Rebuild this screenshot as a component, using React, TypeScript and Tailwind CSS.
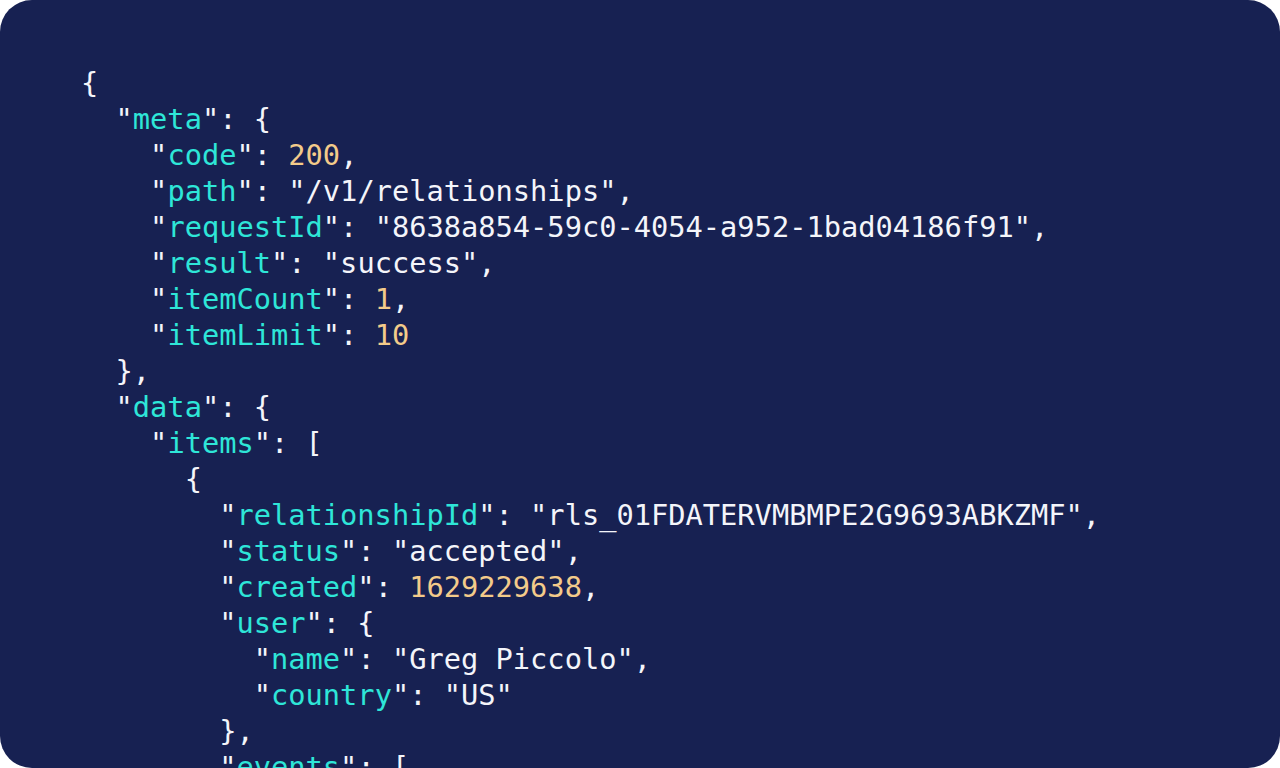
type Tok = { t: string; c?: "k" | "n" | "s" };

const K = (s: string): Tok[] => [{ t: '"' }, { t: s, c: "k" }, { t: '"' }];

const lines: { indent: number; toks: Tok[] }[] = [
  { indent: 0, toks: [{ t: "{" }] },
  { indent: 1, toks: [...K("meta"), { t: ": {" }] },
  { indent: 2, toks: [...K("code"), { t: ": " }, { t: "200", c: "n" }, { t: "," }] },
  { indent: 2, toks: [...K("path"), { t: ': "/v1/relationships",' }] },
  { indent: 2, toks: [...K("requestId"), { t: ': "8638a854-59c0-4054-a952-1bad04186f91",' }] },
  { indent: 2, toks: [...K("result"), { t: ': "success",' }] },
  { indent: 2, toks: [...K("itemCount"), { t: ": " }, { t: "1", c: "n" }, { t: "," }] },
  { indent: 2, toks: [...K("itemLimit"), { t: ": " }, { t: "10", c: "n" }] },
  { indent: 1, toks: [{ t: "}," }] },
  { indent: 1, toks: [...K("data"), { t: ": {" }] },
  { indent: 2, toks: [...K("items"), { t: ": [" }] },
  { indent: 3, toks: [{ t: "{" }] },
  { indent: 4, toks: [...K("relationshipId"), { t: ': "rls_01FDATERVMBMPE2G9693ABKZMF",' }] },
  { indent: 4, toks: [...K("status"), { t: ': "accepted",' }] },
  { indent: 4, toks: [...K("created"), { t: ": " }, { t: "1629229638", c: "n" }, { t: "," }] },
  { indent: 4, toks: [...K("user"), { t: ": {" }] },
  { indent: 5, toks: [...K("name"), { t: ': "Greg Piccolo",' }] },
  { indent: 5, toks: [...K("country"), { t: ': "US"' }] },
  { indent: 4, toks: [{ t: "}," }] },
  { indent: 4, toks: [...K("events"), { t: ": [" }] },
];

export default function App() {
  return (
    <div className="w-[1280px] h-[768px] bg-white">
      <div className="w-full h-full bg-[#172152] rounded-[32px] overflow-hidden pl-[81px] pt-[65px]">
        <pre className="font-['DejaVu_Sans_Mono','Liberation_Mono',monospace] text-[28.7px] leading-[36px] text-[#f4f5fa]">
          {lines.map((l, i) => (
            <div key={i}>
              {"  ".repeat(l.indent)}
              {l.toks.map((tk, j) => (
                <span
                  key={j}
                  className={
                    tk.c === "k"
                      ? "text-[#2ee6d8]"
                      : tk.c === "n"
                      ? "text-[#f3cb8a]"
                      : ""
                  }
                >
                  {tk.t}
                </span>
              ))}
            </div>
          ))}
        </pre>
      </div>
    </div>
  );
}
